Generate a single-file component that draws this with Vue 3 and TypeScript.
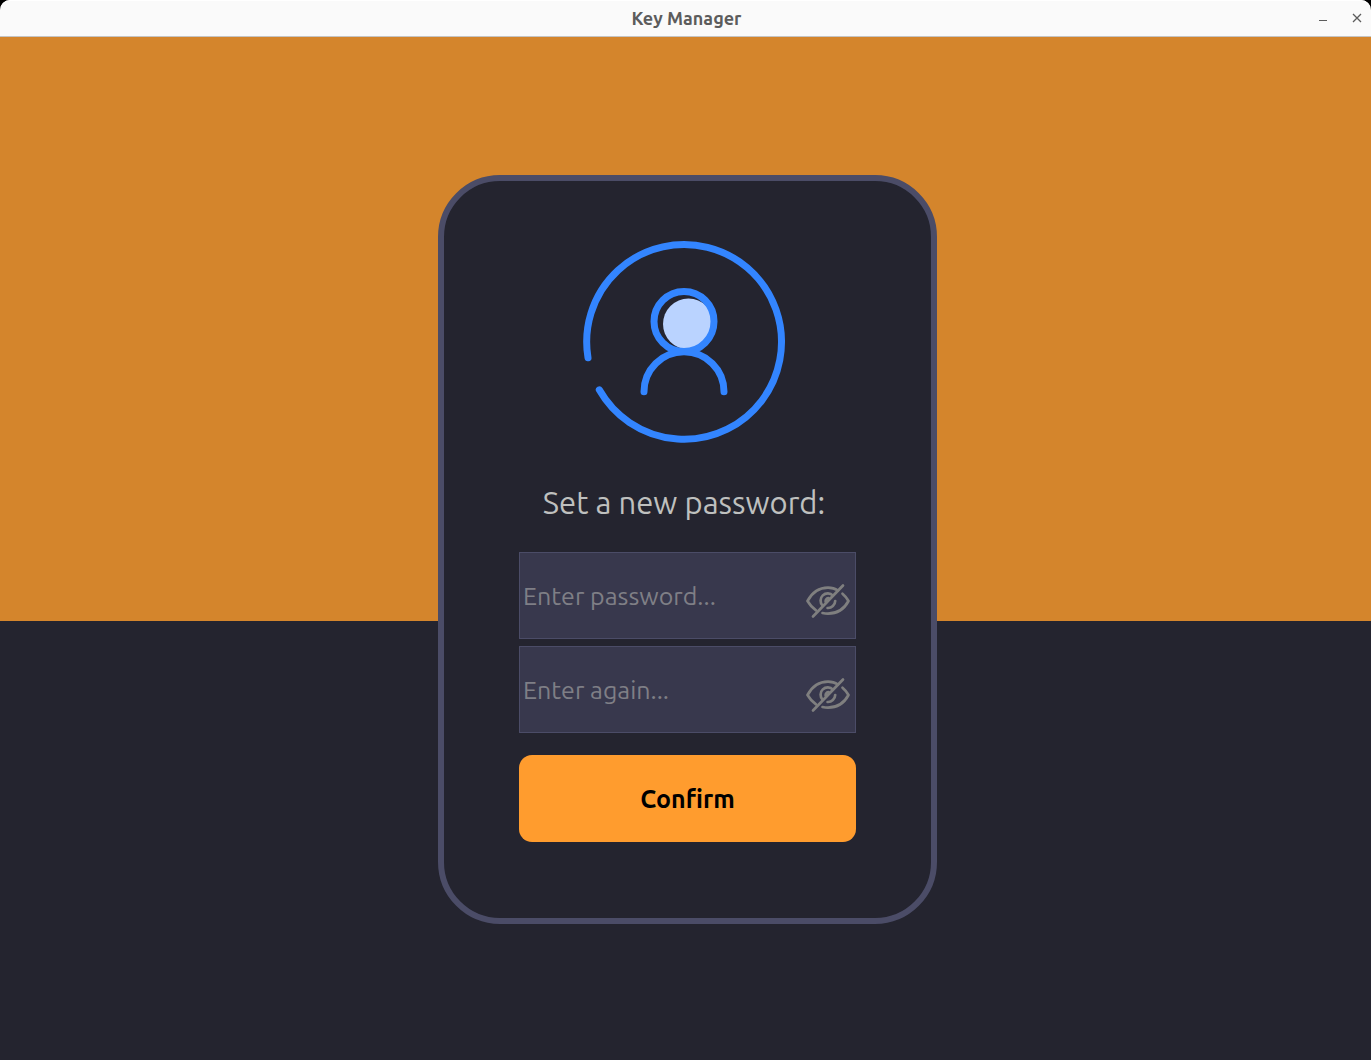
<script setup lang="ts">
import { ref } from 'vue'

interface Field {
  id: string
  label: string
  placeholder: string
}

const fields: Field[] = [
  { id: 'password', label: 'Password', placeholder: 'Enter password...' },
  { id: 'repeat', label: 'Repeat password', placeholder: 'Enter again...' },
]

const values = ref<Record<string, string>>({ password: '', repeat: '' })
const visible = ref<Record<string, boolean>>({ password: false, repeat: false })
</script>

<template>
  <div class="window">
    <header class="titlebar">
      <h1 class="title">Key Manager</h1>
      <div class="controls">
        <button type="button" class="control" aria-label="Minimize">
          <svg width="10" height="10" viewBox="0 0 10 10"><path d="M1 7.5H9" /></svg>
        </button>
        <button type="button" class="control" aria-label="Close">
          <svg width="10" height="10" viewBox="0 0 10 10">
            <path d="M1 1L9 9M9 1L1 9" stroke-width="1.3" />
          </svg>
        </button>
      </div>
    </header>

    <main class="workspace">
      <form class="card" @submit.prevent>
        <div class="intro">
          <svg class="avatar" width="204" height="204" viewBox="0 0 204 204" aria-hidden="true">
            <circle cx="106.5" cy="84" r="25.5" fill="#bad3ff" />
            <g fill="none" stroke="#3385ff" stroke-width="7" stroke-linecap="round">
              <path d="M6 117.8A97.4 97.4 0 1 1 17.3 149.8" />
              <circle cx="102" cy="81.5" r="30" />
              <path d="M62 151.7A40 40 0 0 1 142 151.7" />
            </g>
          </svg>
          <h2 class="heading">Set a new password:</h2>
        </div>

        <div class="fields">
          <div v-for="field in fields" :key="field.id" class="field">
            <input
              :id="field.id"
              v-model="values[field.id]"
              class="input"
              :type="visible[field.id] ? 'text' : 'password'"
              :placeholder="field.placeholder"
              :aria-label="field.label"
            />
            <button
              type="button"
              class="reveal"
              aria-label="Show password"
              @click="visible[field.id] = !visible[field.id]"
            >
              <svg width="46" height="36" viewBox="0 0 46 36">
                <path d="M33 7.5C30 5.5 26.5 4.6 23 4.6C13.5 4.6 6.5 10.5 2.5 18C4.8 22 7.6 25 11 27.3" />
                <path d="M37.5 10.7C40 12.8 42 15.2 43.5 18C39.5 25.5 32.5 30.6 23 30.6C21 30.6 19.2 30.4 17.5 30" />
                <path d="M28 12.6A7.2 7.2 0 0 0 17.6 22.6M30.2 18A7.2 7.2 0 0 1 22.6 25" />
                <path d="M23.6 15.2A3 3 0 0 0 20.6 18.4" />
                <path d="M8 33.5L38 2.5" />
              </svg>
            </button>
          </div>
        </div>

        <button type="submit" class="confirm">Confirm</button>
      </form>
    </main>
  </div>
</template>

<style>
body {
  background: #24242f;
}
</style>

<style scoped>
.window {
  display: flex;
  flex-direction: column;
  min-height: 100vh;
  background: #000;
  font-family: "Ubuntu", "Noto Sans", sans-serif;
}

.titlebar {
  display: grid;
  grid-template-columns: 1fr auto 1fr;
  align-items: center;
  box-sizing: border-box;
  height: 37px;
  border-bottom: 1px solid #c4c4c4;
  border-radius: 10px 10px 0 0;
  background: #fafafa;
  box-shadow: inset 0 1px #fff;
}

.title {
  grid-column: 2;
  margin: 0;
  padding-left: 2px;
  color: #5c5c5c;
  font-size: 18px;
  font-weight: 700;
  line-height: 24px;
}

.controls {
  display: flex;
  justify-content: flex-end;
  gap: 14px;
  padding-right: 4px;
}

.control {
  display: grid;
  place-items: center;
  width: 20px;
  height: 20px;
  padding: 0;
  border: 0;
  background: none;
}

.control svg {
  fill: none;
  stroke: #5c5c5c;
}

.workspace {
  display: grid;
  flex: 1;
  place-items: center;
  padding: 2px 0 0 4px;
  background: linear-gradient(#d4852c 57.1%, #24242f 57.1%);
}

.card {
  display: flex;
  flex-direction: column;
  box-sizing: border-box;
  width: 499px;
  max-width: 100%;
  padding: 59px 75px 76px;
  border: 6px solid #4b4c67;
  border-radius: 62px;
  background: #24242f;
}

.intro {
  display: flex;
  flex-direction: column;
  align-items: center;
  gap: 35px;
  margin: 0 7px 25px 0;
}

.avatar {
  display: block;
}

.heading {
  margin: 0;
  color: #bfc0bf;
  font-size: 31px;
  font-weight: 400;
  line-height: 48px;
  white-space: nowrap;
}

.fields {
  display: grid;
  gap: 7px;
  margin-bottom: 22px;
}

.field {
  position: relative;
}

.input {
  display: block;
  box-sizing: border-box;
  width: 100%;
  height: 87px;
  padding: 1px 56px 0 3px;
  border: 1px solid #4b4c67;
  border-radius: 0;
  outline: 0;
  background: #38384d;
  color: #bfc0bf;
  font: 400 25px "Ubuntu", "Noto Sans", sans-serif;
}

.input::placeholder {
  color: #7f7f86;
  opacity: 1;
}

.reveal {
  position: absolute;
  right: 5px;
  bottom: 20px;
  padding: 0;
  border: 0;
  background: none;
}

.reveal svg {
  display: block;
  fill: none;
  stroke: #7f7f7f;
  stroke-width: 2.7;
  stroke-linecap: round;
  stroke-linejoin: round;
}

.confirm {
  height: 87px;
  padding: 0;
  border: 0;
  border-radius: 13px;
  background: #ff9c2e;
  color: #000;
  font: 700 25px "Ubuntu", "Noto Sans", sans-serif;
}
</style>
